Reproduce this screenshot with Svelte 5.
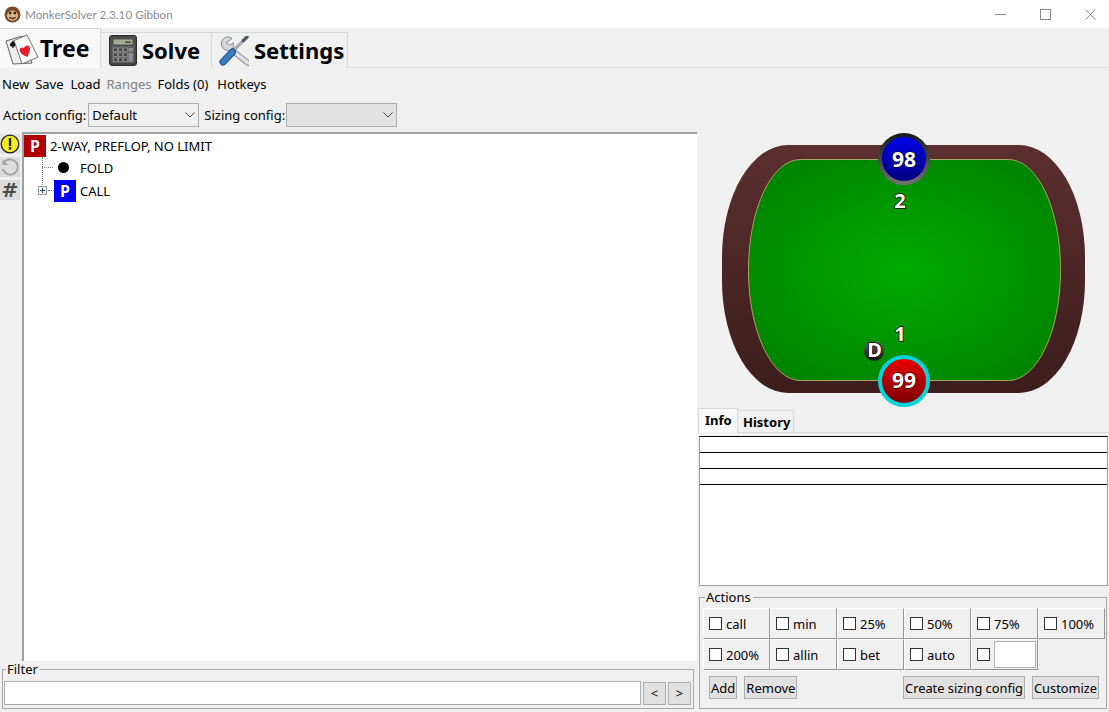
<script>
  const row1 = ['call', 'min', '25%', '50%', '75%', '100%'];
  const row2 = ['200%', 'allin', 'bet', 'auto'];
  const menu = [['New', false], ['Save', false], ['Load', false], ['Ranges', true], ['Folds (0)', false], ['Hotkeys', false]];
</script>

<div class="app">
  <header class="titlebar">
    <svg class="monkey" viewBox="0 0 16 16" width="17" height="17">
      <circle cx="8" cy="8" r="7.5" fill="#7a4a26" />
      <ellipse cx="8" cy="9" rx="5.2" ry="4.8" fill="#d9b38c" />
      <circle cx="5.8" cy="6.6" r="1.3" fill="#33200f" />
      <circle cx="10.2" cy="6.6" r="1.3" fill="#33200f" />
      <path d="M5 10.5q3 2.5 6 0" stroke="#4b2c14" stroke-width="1.2" fill="none" />
    </svg>
    <span class="title">MonkerSolver 2.3.10 Gibbon</span>
    <div class="winctl">
      <svg width="11" height="1" viewBox="0 0 11 1"><rect width="11" height="1" fill="#8a8a8a" /></svg>
      <svg width="11" height="11" viewBox="0 0 11 11"><rect x=".5" y=".5" width="10" height="10" fill="none" stroke="#8a8a8a" /></svg>
      <svg width="11" height="11" viewBox="0 0 11 11"><path d="M.5.5l10 10M10.500.5l-10 10" stroke="#8a8a8a" /></svg>
    </div>
  </header>

  <nav class="tabs">
    <div class="tab active">
      <svg width="34" height="32" viewBox="3 2 34 32">
        <path d="M4 10 20 5 30 32 11 33z" fill="#ececea" stroke="#555" stroke-width=".9" stroke-linejoin="round" />
        <path d="M11 9.500c2 2.500 3.500 3.500 2.500 5.300-.7 1-1.800.7-2.100 0l.5 2h-2l.6-1.700c-.8.500-2 .5-2.500-.6-.6-1.700 1.700-3 3-5z" fill="#111" />
        <path d="M12 9.500 25 4 36 26 20 33z" fill="#fafaf8" stroke="#666" stroke-width=".9" stroke-linejoin="round" />
        <path d="M25.500 26c-5-2-8-4.500-7.800-7.300.2-2 2.500-3 4.300-1.500.6-2.300 3.300-3.300 5-2 2 1.700 1 4.600-1.500 10.800z" fill="#e8202c" />
      </svg>
      <span>Tree</span>
    </div>
    <div class="tab">
      <svg width="28" height="31" viewBox="0 0 28 31">
        <rect x=".5" y=".5" width="27" height="30" rx="2.500" fill="#454545" stroke="#2a2a2a" />
        <rect x="2.500" y="2.500" width="23" height="25.500" rx="1" fill="#5f5f5f" />
        <rect x="4" y="4" width="20" height="6" fill="#a8ae96" stroke="#2a2a2a" stroke-width=".7" />
        <rect x="16" y="6.500" width="6" height="1.400" fill="#3c3c3c" />
        {#each [0, 1, 2] as c}
          {#each [0, 1, 2] as r}
            <rect x={4.500 + c * 5} y={13 + r * 5} width="4" height="3.600" fill="#444" stroke="#9d9d9d" stroke-width=".7" />
          {/each}
        {/each}
        <rect x="19.500" y="13" width="4.500" height="3.600" fill="#8d8d8d" />
        <rect x="19.500" y="18" width="4.500" height="8.600" fill="#8d8d8d" />
      </svg>
      <span>Solve</span>
    </div>
    <div class="tab">
      <svg width="30" height="30" viewBox="5 6 30 30">
        <path d="M15.500 18.500 34 33" stroke="#7e8387" stroke-width="5.500" stroke-linecap="round" />
        <path d="M15.500 18.500 34 33" stroke="#dfe1e3" stroke-width="3.800" stroke-linecap="round" />
        <path d="M18 8.500a6.500 6.500 0 0 0-10 7.700 6.500 6.500 0 0 0 9.500 3.500 6.500 6.500 0 0 0 1.800-7l-3.300 2.500-3.800-2.500z" fill="#d5d8da" stroke="#7e8387" stroke-width=".9" stroke-linejoin="round" />
        <path d="M19 21 30.500 9.500" stroke="#6d7276" stroke-width="2.600" />
        <path d="M19 21 30.500 9.500" stroke="#c9cdd0" stroke-width="1.200" />
        <path d="M29.500 10.500 33 7" stroke="#555a5e" stroke-width="3.400" stroke-linecap="round" />
        <path d="M9 32 18.500 22" stroke="#1f4f86" stroke-width="7" stroke-linecap="round" />
        <path d="M9 32 18.500 22" stroke="#3a7cc2" stroke-width="5" stroke-linecap="round" />
      </svg>
      <span>Settings</span>
    </div>
  </nav>

  <div class="menu">
    {#each menu as [label, off]}
      <span class:off>{label}</span>
    {/each}
  </div>

  <div class="configs">
    <span class="cfglabel">Action config:</span>
    <div class="combo"><span>Default</span><svg width="10" height="6" viewBox="0 0 10 6"><path d="M.5.5l4.500 4.500 4.500-4.500" fill="none" stroke="#444" /></svg></div>
    <span class="cfglabel second">Sizing config:</span>
    <div class="combo disabled"><span></span><svg width="10" height="6" viewBox="0 0 10 6"><path d="M.5.5l4.500 4.500 4.500-4.500" fill="none" stroke="#444" /></svg></div>
  </div>

  <main class="main">
    <section class="left">
      <div class="treearea">
        <div class="sidebtns">
          <div class="sidebtn warn"><svg width="20" height="20" viewBox="0 0 20 20"><circle cx="10" cy="10" r="8.800" fill="#f5ee1e" stroke="#222" stroke-width="1.300" /><rect x="8.800" y="4" width="2.400" height="8" fill="#222" /><rect x="8.800" y="13" width="2.400" height="2.600" fill="#222" /></svg></div>
          <div class="sidebtn"><svg width="20" height="20" viewBox="0 0 20 20"><path d="M4 5.500A7.600 7.600 0 1 1 2.800 12" fill="none" stroke="#a0a0a0" stroke-width="1.700" /><path d="M2.500 2.500v5.500h5.500z" fill="#a0a0a0" /></svg></div>
          <div class="sidebtn hash">#</div>
        </div>
        <div class="tree">
          <div class="node root"><span class="badge red">P</span><span>2-WAY, PREFLOP, NO LIMIT</span></div>
          <div class="node fold"><span class="dotslot"><i class="dot"></i></span><span>FOLD</span></div>
          <div class="node call"><span class="badge blue">P</span><span>CALL</span></div>
          <i class="vline"></i>
          <i class="hline h1"></i>
          <i class="hline h2"></i>
          <i class="expander"></i>
        </div>
      </div>
      <fieldset class="filter">
        <legend>Filter</legend>
        <div class="filterrow">
          <div class="input"></div>
          <button class="mini">&lt;</button>
          <button class="mini">&gt;</button>
        </div>
      </fieldset>
    </section>

    <aside class="right">
      <svg class="table" width="411" height="276" viewBox="0 0 411 276">
        <defs>
          <linearGradient id="rail" x1="0" y1="0" x2="0" y2="1">
            <stop offset="0" stop-color="#5c2f2f" />
            <stop offset="1" stop-color="#3c1d1d" />
          </linearGradient>
          <radialGradient id="felt" cx="50%" cy="50%" r="60%">
            <stop offset="0" stop-color="#00ab00" />
            <stop offset="1" stop-color="#008400" />
          </radialGradient>
          <linearGradient id="blue" x1="0" y1="0" x2="0" y2="1">
            <stop offset="0" stop-color="#0000f0" />
            <stop offset="1" stop-color="#00007a" />
          </linearGradient>
          <linearGradient id="red" x1="0" y1="0" x2="0" y2="1">
            <stop offset="0" stop-color="#ee0000" />
            <stop offset="1" stop-color="#780000" />
          </linearGradient>
          <linearGradient id="ring" x1="0" y1="0" x2="0" y2="1">
            <stop offset="0" stop-color="#1c1c1c" />
            <stop offset="1" stop-color="#707070" />
          </linearGradient>
          <linearGradient id="dealer" x1="0" y1="0" x2="0" y2="1">
            <stop offset="0" stop-color="#666" />
            <stop offset="1" stop-color="#111" />
          </linearGradient>
        </defs>
        <rect x="24" y="13" width="363" height="248" rx="66" ry="112" fill="url(#rail)" />
        <rect x="50.500" y="27.500" width="312" height="221" rx="52" ry="110" fill="url(#felt)" stroke="#a8a565" />
        <circle cx="206" cy="27" r="24" fill="url(#blue)" stroke="url(#ring)" stroke-width="4" />
        <text class="stack" x="206" y="35">98</text>
        <text class="seat" x="202" y="76">2</text>
        <text class="seat" x="202" y="209">1</text>
        <circle cx="176" cy="219" r="10" fill="url(#dealer)" />
        <text class="seat" x="176.500" y="225">D</text>
        <circle cx="206" cy="249" r="24" fill="url(#red)" stroke="#08d3dc" stroke-width="4" />
        <text class="stack" x="206" y="256">99</text>
      </svg>

      <div class="infotabs">
        <div class="itab on">Info</div>
        <div class="itab">History</div>
      </div>
      <div class="infobox">
        <div class="inforow"></div>
        <div class="inforow"></div>
        <div class="inforow"></div>
      </div>

      <fieldset class="actions">
        <legend>Actions</legend>
        <div class="grid">
          {#each row1 as a}
            <label class="cell"><i class="check"></i>{a}</label>
          {/each}
          {#each row2 as a}
            <label class="cell"><i class="check"></i>{a}</label>
          {/each}
          <div class="cell custom"><i class="check"></i><div class="custominput"></div></div>
        </div>
        <div class="btnrow">
          <button>Add</button>
          <button>Remove</button>
          <span class="spacer"></span>
          <button>Create sizing config</button>
          <button>Customize</button>
        </div>
      </fieldset>
    </aside>
  </main>
</div>

<style>
  :global(body) { margin: 0; background: #f0f0f0; }
  .app {
    width: 1109px; height: 712px; overflow: hidden; background: #f0f0f0; color: #000;
    font: 13px/18px "Noto Sans", sans-serif; display: flex; flex-direction: column;
  }
  .titlebar { height: 28px; background: #fff; display: flex; align-items: center; padding-left: 4px; flex: none; }
  .monkey { margin-right: 4px; }
  .title { color: #8c8c8c; font: 11.700px/18px Lato, sans-serif; }
  .winctl { margin-left: auto; display: flex; align-items: center; gap: 34px; padding-right: 13px; }

  .tabs { height: 40px; display: flex; align-items: flex-end; flex: none; border-bottom: 1px solid #d9d9d9; box-sizing: border-box; }
  .tab {
    height: 36px; box-sizing: border-box; border: 1px solid #d9d9d9; border-bottom: 0; border-left: 0;
    background: #f0f0f0; display: flex; align-items: center; gap: 5px; padding: 0 2px 0 8px;
    font-size: 22px; font-weight: 700; line-height: 30px; margin-bottom: -1px;
  }
  .tab svg { flex: none; }
  .tab span { margin-top: -2px; }
  .tab:nth-child(2) { width: 111px; }
  .tab:nth-child(3) { width: 136px; padding-left: 7px; }
  .tab.active { height: 40px; width: 101px; background: #f8f8f8; padding-left: 5px; gap: 1px; font-size: 23px; }
  .tab.active span { margin-top: -1px; }

  .menu { height: 32px; display: flex; align-items: center; gap: 6px; padding-left: 2px; flex: none; }
  .menu span:nth-child(3) { margin-left: 1px; }
  .menu span:nth-child(5) { padding-right: 3px; }
  .off { color: #808080; }

  .configs { height: 32px; box-sizing: border-box; padding: 0 0 2px 3px; display: flex; align-items: center; flex: none; }
  .cfglabel { margin-right: 2px; }
  .second { margin-left: 5px; margin-right: 1px; }
  .combo {
    width: 111px; height: 24px; box-sizing: border-box; border: 1px solid #adadad; background: #f0f0f0;
    display: flex; align-items: center; justify-content: space-between; padding: 0 3px 0 3px;
  }
  .combo.disabled { background: #e2e2e2; }

  .main { flex: 1; display: flex; min-height: 0; }
  .left { width: 698px; flex: none; display: flex; flex-direction: column; }
  .treearea { height: 529px; display: flex; flex: none; }
  .sidebtns { width: 22px; flex: none; display: flex; flex-direction: column; gap: 3px; padding-top: 2px; }
  .sidebtn { width: 20px; height: 20px; background: #dcdcdc; display: flex; align-items: center; justify-content: center; }
  .sidebtn.warn { background: #e4e4e4; }
  .hash { color: #4a4a4a; font: 700 20px/20px "DejaVu Sans", sans-serif; }

  .tree {
    position: relative; width: 675px; box-sizing: border-box; background: #fff;
    border-top: 2px solid #a0a0a0; border-left: 2px solid #a0a0a0; padding-top: 1px;
  }
  .node { display: flex; align-items: center; height: 23px; }
  .node.root { gap: 4px; height: 22px; }
  .node.fold { padding-left: 30px; gap: 4px; margin-top: -1px; }
  .node.call { padding-left: 30px; gap: 4px; }
  .dotslot { width: 22px; display: flex; }
  .dot { width: 11px; height: 11px; border-radius: 50%; background: #000; margin-left: 4px; }
  .badge {
    width: 22px; height: 22px; display: flex; align-items: center; justify-content: center;
    color: #fff; font-weight: 700; font-size: 16px;
  }
  .red { background: #b00000; }
  .blue { background: #0000f5; }
  .vline { position: absolute; left: 18px; top: 23px; height: 28px; border-left: 1px dotted #777; }
  .hline { position: absolute; height: 0; border-top: 1px dotted #777; }
  .h1 { left: 18px; top: 33px; width: 11px; }
  .h2 { left: 24px; top: 56px; width: 6px; }
  .expander {
    position: absolute; left: 14px; top: 52px; width: 9px; height: 9px; box-sizing: border-box;
    border: 1px solid #9a9a9a; background:
      linear-gradient(#274a7c, #274a7c) center / 5px 1px no-repeat,
      linear-gradient(#274a7c, #274a7c) center / 1px 5px no-repeat, #f4f4f4;
  }

  fieldset { margin: 0; min-width: 0; border: 1px solid #a8a8a8; padding: 0; box-sizing: border-box; }
  legend { padding: 0 2px 0 1px; margin-left: 2px; line-height: 16px; font-size: 13px; }

  .filter { margin: 0 0 0 2px; width: 692px; height: 48px; padding: 0 0 0 1px; }
  .filterrow { display: flex; align-items: center; margin-top: 4px; }
  .input { width: 637px; height: 24px; box-sizing: border-box; background: #fff; border: 1px solid #adadad; }
  .mini {
    width: 23px; height: 23px; margin-left: 2px; padding: 0; background: #e1e1e1; border: 1px solid #adadad;
    font: 13px/18px "Noto Sans", sans-serif;
  }

  .right { width: 411px; flex: none; display: flex; flex-direction: column; }
  .table { display: block; flex: none; }
  .infotabs { display: flex; align-items: flex-end; height: 25px; flex: none; border-bottom: 1px solid #d9d9d9; box-sizing: border-box; }
  .itab {
    font-weight: 700; font-size: 13px; height: 22px; box-sizing: border-box; padding: 2px 3px 0 5px;
    border: 1px solid #d9d9d9; border-bottom: 0; border-left: 0; background: #f0f0f0;
  }
  .itab.on { height: 25px; width: 40px; background: #f8f8f8; border-left: 1px solid #d9d9d9; padding: 2px 5px 0 6px; margin-bottom: -1px; }
  .infobox {
    margin: 3px 1px 0; height: 150px; box-sizing: border-box; background: #fff;
    border: 1px solid #a0a0a0; border-top: 1px solid #000; flex: none;
  }
  .inforow { height: 16px; box-sizing: border-box; border-bottom: 1px solid #000; }

  .actions { margin: 3px 2px 0 1px; height: 120px; padding: 0 0 0 3px; }
  .grid { display: grid; grid-template-columns: repeat(6, 67px); grid-auto-rows: 31px; margin-top: 3px; }
  .cell {
    box-sizing: border-box; display: flex; align-items: center; gap: 4px; padding-left: 5px;
    background: #f0f0f0; border: 1px solid; border-color: #fff #969696 #969696 #fff;
  }
  .check { width: 13px; height: 13px; box-sizing: border-box; background: #fff; border: 1px solid #333; flex: none; }
  .custom { padding-right: 1px; }
  .custominput { flex: 1; height: 27px; background: #fff; border: 1px solid #b0b0b0; box-sizing: border-box; }
  .btnrow { display: flex; align-items: center; gap: 7px; padding: 6px 7px 0 6px; }
  .spacer { flex: 1; }
  .btnrow button {
    height: 23px; padding: 0 1px; background: #e1e1e1; border: 1px solid #adadad;
    font: 12.800px/18px "Noto Sans", sans-serif; color: #000;
  }
  .btnrow button:nth-child(-n+2) { font-size: 13px; }

  .stack { font: 700 21px "Noto Sans", sans-serif; fill: #fff; text-anchor: middle; stroke: #000; stroke-width: 1px; paint-order: stroke; }
  .seat { font: 700 20px "Noto Sans", sans-serif; fill: #fff; text-anchor: middle; stroke: #000; stroke-width: 1.500px; paint-order: stroke; }
</style>
